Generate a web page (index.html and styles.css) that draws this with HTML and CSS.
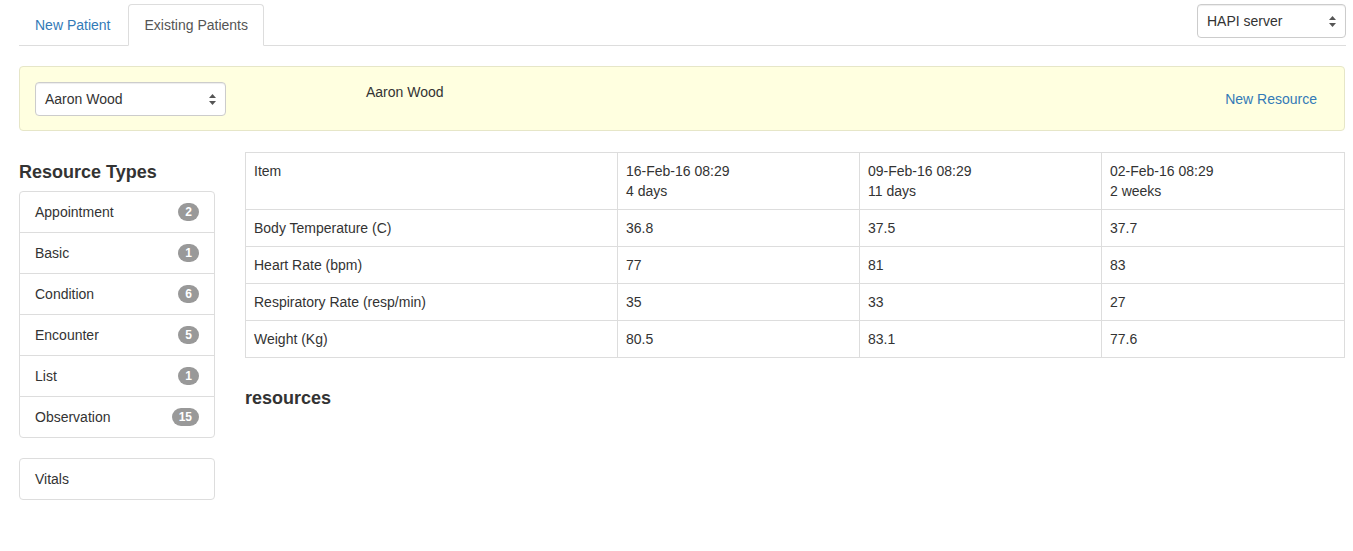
FILE: index.html
```html
<!DOCTYPE html>
<html>
<head>
<meta charset="utf-8">
<link rel="stylesheet" href="styles.css">
</head>
<body>
<div class="page">
  <div class="topbar">
    <ul class="tabs">
      <li class="tab"><a class="tab-link">New Patient</a></li>
      <li class="tab active"><a class="tab-link">Existing Patients</a></li>
    </ul>
    <div class="select server-select">
      <span>HAPI server</span>
      <svg class="arrows" width="7" height="11" viewBox="0 0 7 11"><path d="M3.5 0 L7 4 L0 4 Z M3.5 11 L7 7 L0 7 Z" fill="#555"/></svg>
    </div>
  </div>

  <div class="well">
    <div class="select patient-select">
      <span>Aaron Wood</span>
      <svg class="arrows" width="7" height="11" viewBox="0 0 7 11"><path d="M3.5 0 L7 4 L0 4 Z M3.5 11 L7 7 L0 7 Z" fill="#555"/></svg>
    </div>
    <div class="patient-name">Aaron Wood</div>
    <a class="new-resource">New Resource</a>
  </div>

  <div class="main">
    <div class="sidebar">
      <h4 class="heading">Resource Types</h4>
      <ul class="list-group">
        <li class="list-item">Appointment<span class="badge">2</span></li>
        <li class="list-item">Basic<span class="badge">1</span></li>
        <li class="list-item">Condition<span class="badge">6</span></li>
        <li class="list-item">Encounter<span class="badge">5</span></li>
        <li class="list-item">List<span class="badge">1</span></li>
        <li class="list-item">Observation<span class="badge">15</span></li>
      </ul>
      <ul class="list-group">
        <li class="list-item">Vitals</li>
      </ul>
    </div>
    <div class="content">
      <table class="vitals">
        <colgroup>
          <col class="c-item">
          <col class="c-date">
          <col class="c-date">
          <col>
        </colgroup>
        <tr>
          <td>Item</td>
          <td>16-Feb-16 08:29<br>4 days</td>
          <td>09-Feb-16 08:29<br>11 days</td>
          <td>02-Feb-16 08:29<br>2 weeks</td>
        </tr>
        <tr><td>Body Temperature (C)</td><td>36.8</td><td>37.5</td><td>37.7</td></tr>
        <tr><td>Heart Rate (bpm)</td><td>77</td><td>81</td><td>83</td></tr>
        <tr><td>Respiratory Rate (resp/min)</td><td>35</td><td>33</td><td>27</td></tr>
        <tr><td>Weight (Kg)</td><td>80.5</td><td>83.1</td><td>77.6</td></tr>
      </table>
      <h4 class="heading">resources</h4>
    </div>
  </div>
</div>
</body>
</html>
```

FILE: styles.css
```css
* { box-sizing: border-box; }
html, body { margin: 0; padding: 0; background: #fff; }
body {
  font-family: "Liberation Sans", Arial, sans-serif;
  font-size: 14px;
  line-height: 20px;
  color: #333;
}
.page { padding: 4px 7px 0 19px; }

.topbar {
  display: flex;
  justify-content: space-between;
  align-items: flex-start;
  border-bottom: 1px solid #ddd;
  height: 42px;
}
.tabs {
  list-style: none;
  margin: 0;
  padding: 0;
  display: flex;
}
.tab-link {
  display: block;
  padding: 10px 15px;
  line-height: 20px;
  color: #337ab7;
  border: 1px solid transparent;
  border-radius: 4px 4px 0 0;
  margin-right: 2px;
  height: 42px;
}
.tab.active .tab-link {
  color: #555;
  background: #fff;
  border-color: #ddd #ddd transparent #ddd;
}

.select {
  display: flex;
  align-items: center;
  justify-content: space-between;
  height: 34px;
  padding: 0 9px 0 9px;
  border: 1px solid #ccc;
  border-radius: 4px;
  background: #fff;
  color: #333;
  box-shadow: inset 0 1px 1px rgba(0,0,0,0.075);
}
.server-select { width: 149px; margin-right: 0; }
.patient-select { width: 191px; }
.arrows { display: block; }

.well {
  margin-top: 20px;
  display: flex;
  align-items: flex-start;
  padding: 15px;
  background: #ffffe0;
  border: 1px solid #e6e6c8;
  border-radius: 4px;
  height: 65px;
  margin-right: 1px;
}
.patient-name { margin-left: 140px; }
.new-resource {
  margin-left: auto;
  margin-right: 12px;
  color: #337ab7;
  align-self: center;
  line-height: 20px;
}

.main {
  display: flex;
  margin-top: 21px;
  gap: 30px;
}
.sidebar { width: 196px; flex: none; }
.content { flex: 1; margin-right: 1px; }

.heading {
  font-size: 18px;
  font-weight: bold;
  line-height: 20px;
  margin: 10px 0 9px 0;
  color: #333;
}
.content .heading { margin-top: 30px; }

.list-group {
  list-style: none;
  margin: 0 0 20px 0;
  padding: 0;
}
.list-item {
  display: flex;
  justify-content: space-between;
  align-items: center;
  padding: 10px 15px;
  border: 1px solid #ddd;
  margin-bottom: -1px;
  height: 42px;
  background: #fff;
}
.list-item:first-child { border-radius: 4px 4px 0 0; }
.list-item:last-child { border-radius: 0 0 4px 4px; margin-bottom: 0; }
.list-item:only-child { border-radius: 4px; }

.badge {
  display: inline-block;
  min-width: 10px;
  padding: 3px 7px;
  font-size: 12px;
  font-weight: bold;
  line-height: 12px;
  color: #fff;
  background: #999;
  border-radius: 10px;
  text-align: center;
}

.vitals {
  width: 100%;
  border-collapse: collapse;
  table-layout: fixed;
  border: 1px solid #ddd;
}
.c-item { width: 372px; }
.c-date { width: 242px; }
.vitals td {
  padding: 8px;
  border: 1px solid #ddd;
  vertical-align: top;
  line-height: 20px;
}
```
